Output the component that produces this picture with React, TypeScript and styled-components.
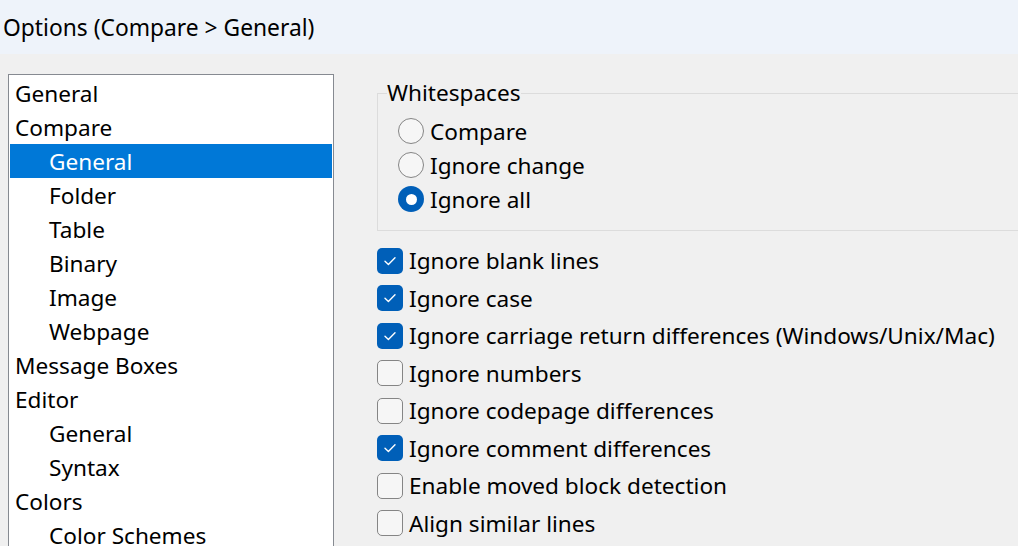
import React from "react";
import styled, { createGlobalStyle } from "styled-components";

const GlobalStyle = createGlobalStyle`
  html, body { margin: 0; padding: 0; }
  body {
    width: 1018px;
    height: 546px;
    overflow: hidden;
    background: #f0f0f0;
    font-family: "Noto Sans", "Open Sans", sans-serif;
    font-size: 22.6px;
    color: #000;
  }
`;

const Window = styled.div`
  width: 1018px;
  height: 546px;
  display: flex;
  flex-direction: column;
  overflow: hidden;
  background: #f0f0f0;
`;

const TitleBar = styled.div`
  height: 54px;
  flex: none;
  display: flex;
  align-items: center;
  padding-left: 3px;
  box-sizing: border-box;
  background: #eef3fa;
  font-size: 22.8px;
  white-space: nowrap;
`;

const Body = styled.div`
  flex: 1;
  display: flex;
  align-items: flex-start;
  gap: 43px;
  padding: 20px 0 0 8px;
  min-height: 0;
  overflow: hidden;
`;

const Tree = styled.div`
  width: 326px;
  flex: none;
  box-sizing: border-box;
  border: 1px solid #868a91;
  background: #fff;
  padding: 1px;
  display: flex;
  flex-direction: column;
`;

const TreeItem = styled.div<{ $level: number; $selected?: boolean }>`
  height: 34px;
  display: flex;
  align-items: center;
  padding-top: 1px;
  box-sizing: border-box;
  padding-left: ${(p) => (p.$level === 0 ? 5 : 39)}px;
  background: ${(p) => (p.$selected ? "#0078d7" : "transparent")};
  color: ${(p) => (p.$selected ? "#fff" : "#000")};
  white-space: nowrap;
  flex: none;
`;

const Pane = styled.div`
  flex: 1;
  min-width: 0;
  display: flex;
  flex-direction: column;
  overflow: hidden;
`;

const Group = styled.fieldset`
  margin: 4px 0 0 0;
  padding: 0;
  width: 760px;
  flex: none;
  border: 1px solid #dcdcdc;
  min-inline-size: auto;
`;

const Legend = styled.legend`
  margin-left: 9px;
  padding: 0;
  line-height: 30px;
  white-space: nowrap;
`;

const GroupBody = styled.div`
  display: flex;
  flex-direction: column;
  padding: 6px 0 14px 20px;
`;

const OptionRow = styled.label<{ $h: number }>`
  height: ${(p) => p.$h}px;
  display: flex;
  align-items: center;
  gap: 6px;
  white-space: nowrap;
  flex: none;
`;

const RadioCircle = styled.span<{ $on?: boolean }>`
  width: 26px;
  height: 26px;
  box-sizing: border-box;
  border-radius: 50%;
  flex: none;
  display: flex;
  align-items: center;
  justify-content: center;
  background: ${(p) => (p.$on ? "#005fb8" : "#f6f6f6")};
  border: ${(p) => (p.$on ? "none" : "1.5px solid #858585")};
`;

const RadioDot = styled.span`
  width: 11px;
  height: 11px;
  border-radius: 50%;
  background: #fff;
`;

const Checks = styled.div`
  margin-top: 11px;
  display: flex;
  flex-direction: column;
`;

const Box = styled.span<{ $on?: boolean }>`
  width: 26px;
  height: 26px;
  box-sizing: border-box;
  border-radius: 5px;
  flex: none;
  display: flex;
  align-items: center;
  justify-content: center;
  background: ${(p) => (p.$on ? "#005fb8" : "#f6f6f6")};
  border: ${(p) => (p.$on ? "none" : "1.5px solid #858585")};
`;

const Radio = ({ on, label }: { on?: boolean; label: string }) => (
  <OptionRow $h={34}>
    <RadioCircle $on={on}>{on && <RadioDot />}</RadioCircle>
    <span>{label}</span>
  </OptionRow>
);

const Check = ({ on, label }: { on?: boolean; label: string }) => (
  <OptionRow $h={37.5}>
    <Box $on={on}>
      {on && (
        <svg width="14" height="14" viewBox="0 0 14 14">
          <polyline
            points="2,7.3 5.4,10.5 12,3.8"
            fill="none"
            stroke="#fff"
            strokeWidth="1.4"
            strokeLinecap="round"
            strokeLinejoin="round"
          />
        </svg>
      )}
    </Box>
    <span>{label}</span>
  </OptionRow>
);

const treeItems: { label: string; level: number; selected?: boolean }[] = [
  { label: "General", level: 0 },
  { label: "Compare", level: 0 },
  { label: "General", level: 1, selected: true },
  { label: "Folder", level: 1 },
  { label: "Table", level: 1 },
  { label: "Binary", level: 1 },
  { label: "Image", level: 1 },
  { label: "Webpage", level: 1 },
  { label: "Message Boxes", level: 0 },
  { label: "Editor", level: 0 },
  { label: "General", level: 1 },
  { label: "Syntax", level: 1 },
  { label: "Colors", level: 0 },
  { label: "Color Schemes", level: 1 },
];

const checks: { label: string; on?: boolean }[] = [
  { label: "Ignore blank lines", on: true },
  { label: "Ignore case", on: true },
  { label: "Ignore carriage return differences (Windows/Unix/Mac)", on: true },
  { label: "Ignore numbers" },
  { label: "Ignore codepage differences" },
  { label: "Ignore comment differences", on: true },
  { label: "Enable moved block detection" },
  { label: "Align similar lines" },
];

export default function App() {
  return (
    <>
      <GlobalStyle />
      <Window>
        <TitleBar>Options (Compare &gt; General)</TitleBar>
        <Body>
          <Tree>
            {treeItems.map((t, i) => (
              <TreeItem key={i} $level={t.level} $selected={t.selected}>
                {t.label}
              </TreeItem>
            ))}
          </Tree>
          <Pane>
            <Group>
              <Legend>Whitespaces</Legend>
              <GroupBody>
                <Radio label="Compare" />
                <Radio label="Ignore change" />
                <Radio label="Ignore all" on />
              </GroupBody>
            </Group>
            <Checks>
              {checks.map((c, i) => (
                <Check key={i} label={c.label} on={c.on} />
              ))}
            </Checks>
          </Pane>
        </Body>
      </Window>
    </>
  );
}
